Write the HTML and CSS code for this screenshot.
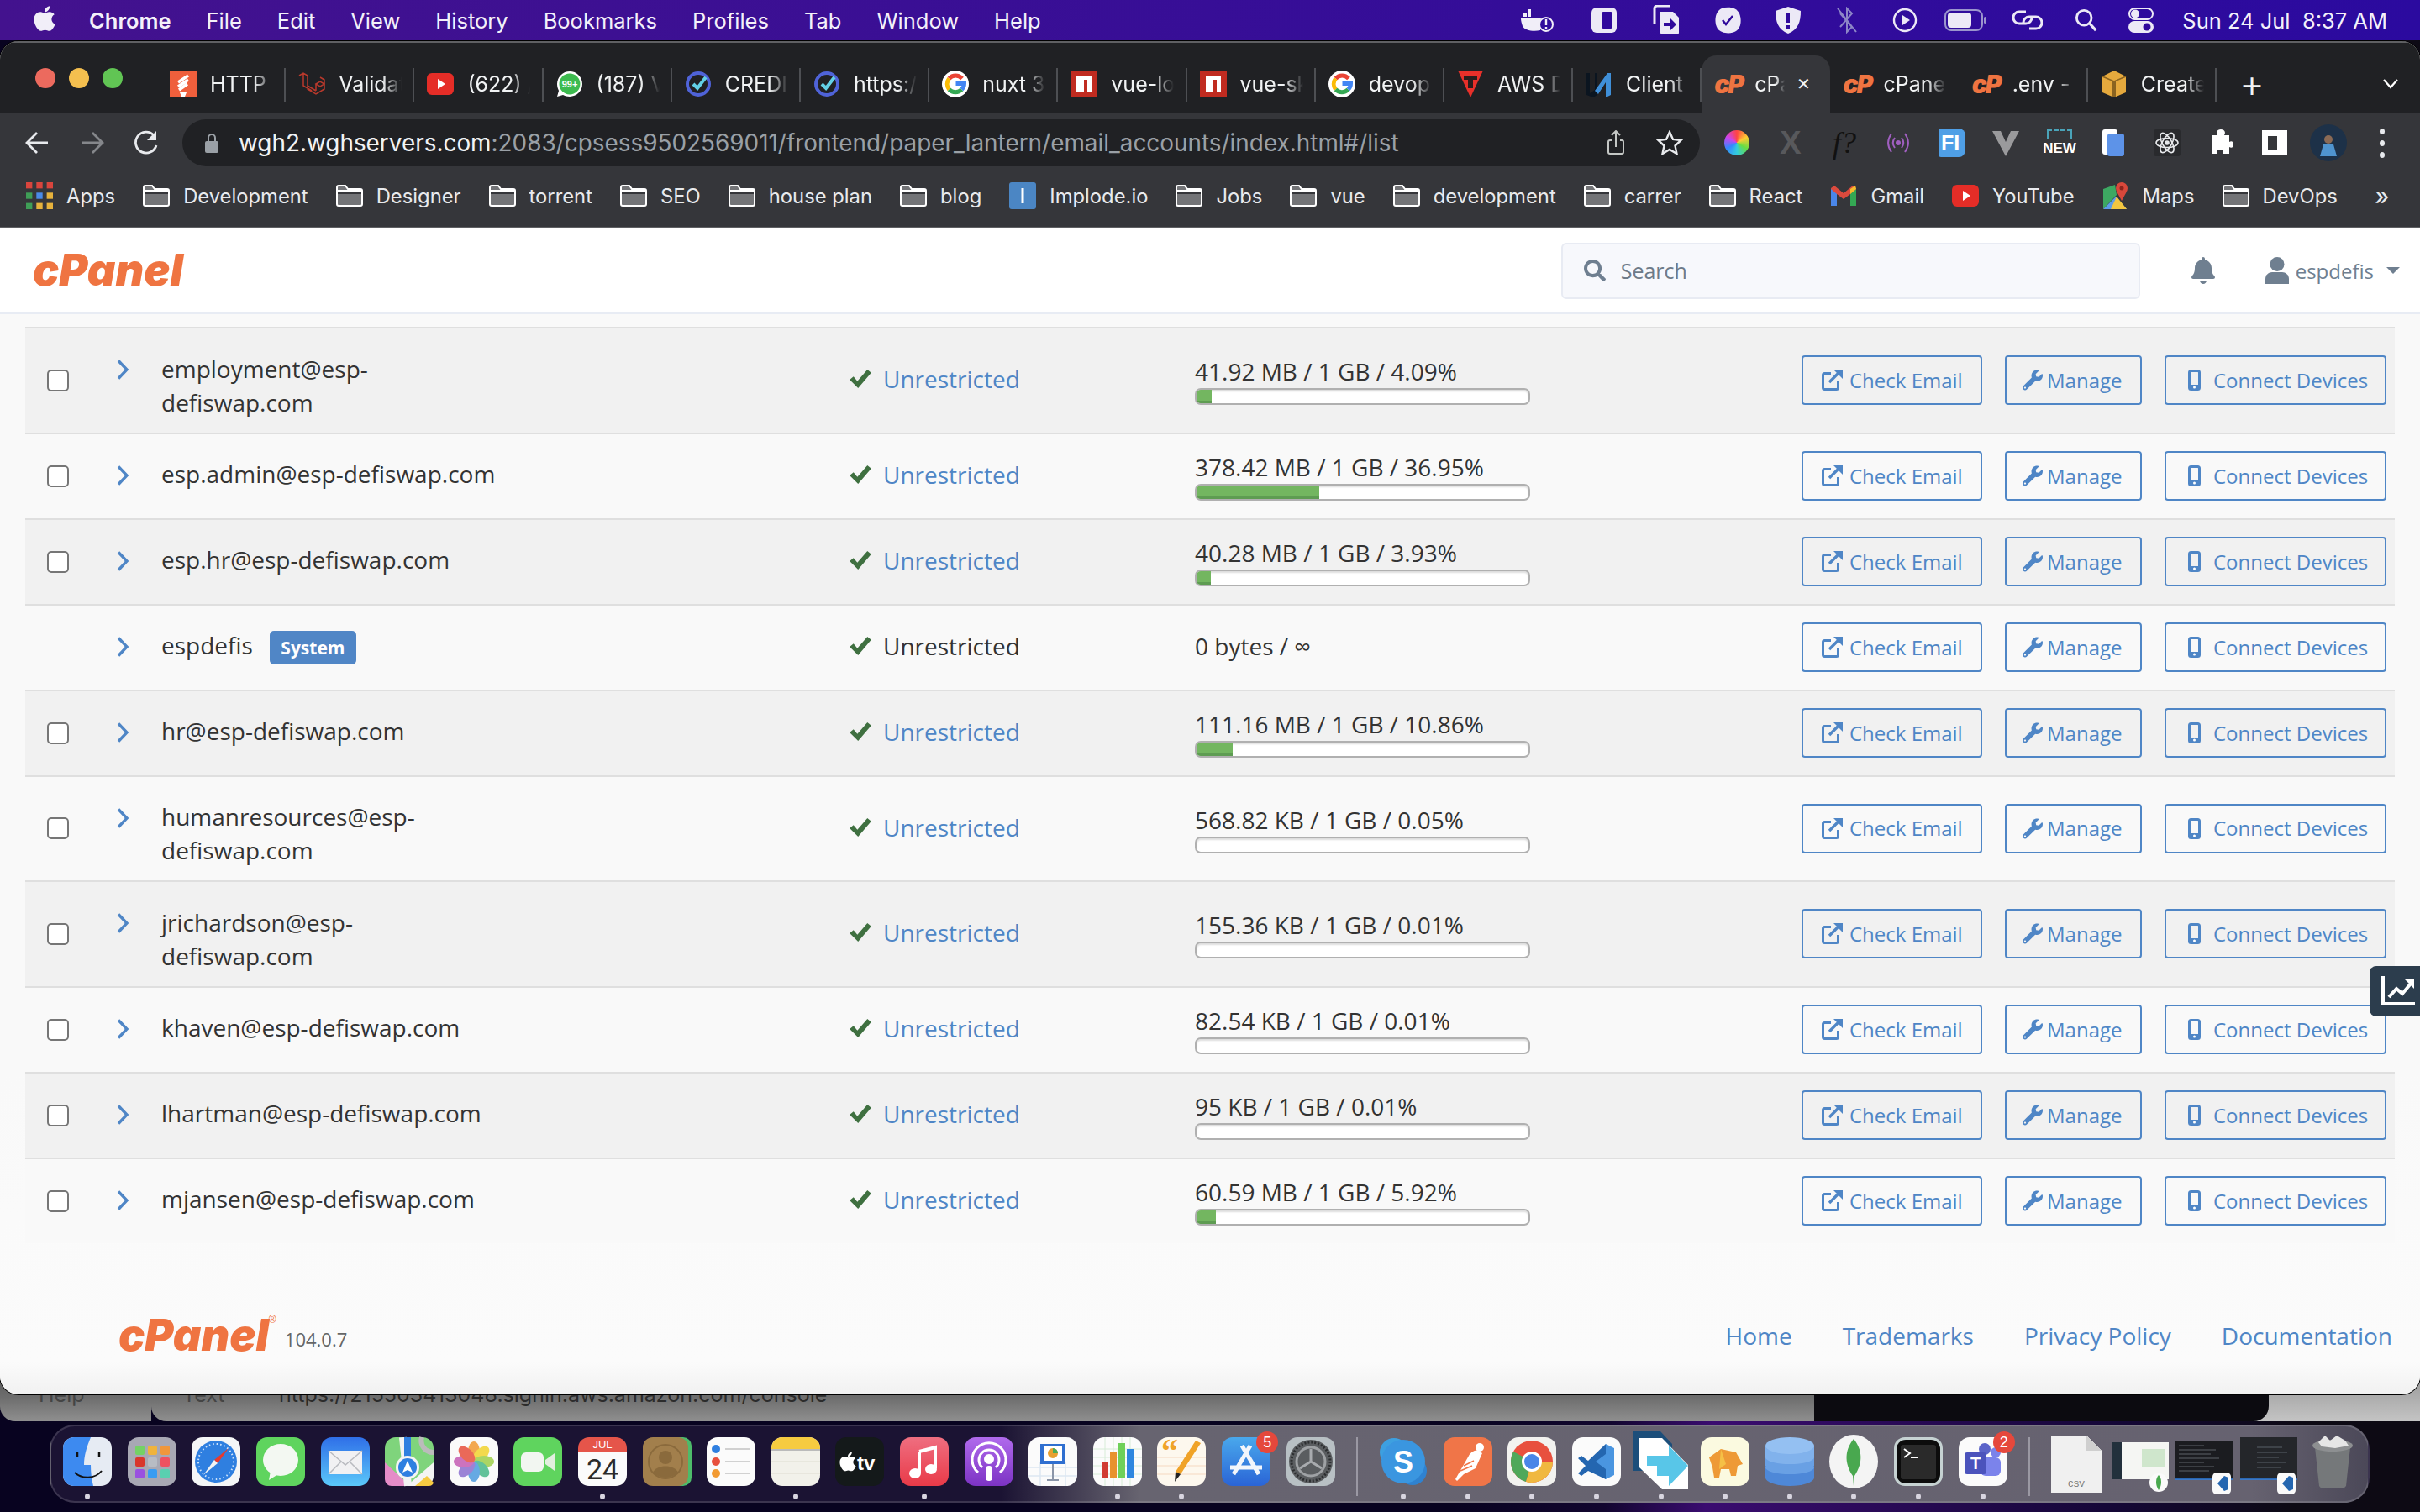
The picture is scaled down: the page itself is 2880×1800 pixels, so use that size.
FILE: index.html
```html
<!DOCTYPE html>
<html lang="en">
  <head>
    <meta charset="UTF-8" />
    <title>cPanel - Email Accounts</title>
    <link rel="stylesheet" href="styles.css">
  </head>
  <body>
    <!-- shared icons -->
    <svg class="defs" aria-hidden="true">
      <symbol id="i-apple" viewBox="0 0 384 512"><path d="M318.7 268.7c-.2-36.7 16.4-64.4 50-84.8-18.8-26.9-47.2-41.7-84.7-44.6-35.5-2.8-74.3 20.7-88.5 20.7-15 0-49.4-19.7-76.4-19.7C63.3 141.2 4 184.8 4 273.5q0 39.3 14.4 81.2c12.8 36.7 59 126.7 107.2 125.2 25.2-.6 43-17.9 75.8-17.9 31.8 0 48.3 17.9 76.4 17.9 48.6-.7 90.4-82.5 102.6-119.3-65.2-30.7-61.7-90-61.7-91.9zm-56.6-164.2c27.3-32.4 24.8-61.9 24-72.5-24.1 1.4-52 16.4-67.9 34.9-17.5 19.8-27.8 44.3-25.6 71.9 26.1 2 49.9-11.4 69.5-34.3z"/></symbol>
      <symbol id="i-folder" viewBox="0 0 32 26"><path d="M1 3a2 2 0 0 1 2-2h8l3 4h15a2 2 0 0 1 2 2v16a2 2 0 0 1-2 2H3a2 2 0 0 1-2-2z" fill="#737477" stroke="#fff" stroke-width="2"/><path d="M1 7h30" stroke="#fff" stroke-width="2"/><rect x="2" y="8" width="28" height="3" fill="#35363a"/></symbol>
      <symbol id="i-google" viewBox="0 0 32 32"><circle cx="16" cy="16" r="16" fill="#fff"/><g fill="none" stroke-width="5"><path d="M24 9.5a10.5 10.5 0 0 0-15.5 0" stroke="#ea4335"/><path d="M8.5 9.5a10.5 10.5 0 0 0 0 13" stroke="#fbbc05"/><path d="M8.5 22.500a10.500 10.500 0 0 0 15 0" stroke="#34a853"/><path d="M23.500 22.500c2-2 3-4 3-7h-10" stroke="#4285f4"/></g></symbol>
      <symbol id="i-npm" viewBox="0 0 32 32"><rect width="32" height="32" fill="#c02b20"/><path d="M7 26V6h18v20h-5V11h-4v15z" fill="#fff"/></symbol>
      <symbol id="i-task" viewBox="0 0 32 32"><circle cx="16" cy="16" r="13" fill="none" stroke="#4f63d8" stroke-width="4"/><path d="M10 16l5 5 10-13" fill="none" stroke="#62d0e6" stroke-width="4"/></symbol>
      <symbol id="i-yt" viewBox="0 0 32 32"><rect y="3" width="32" height="26" rx="6" fill="#e52d27"/><path d="M13 10l9 6-9 6z" fill="#fff"/></symbol>
      <symbol id="i-check" viewBox="0 0 28 24"><path d="M0 13l5-4 5 6L23 0l5 4-17 20z"/></symbol>
      <symbol id="i-chevron" viewBox="0 0 15 24"><path d="M2 1.500l10 10.500-10 10.500" fill="none" stroke="currentColor" stroke-width="3.400"/></symbol>
      <symbol id="i-external" viewBox="0 0 25 25"><path d="M11 4.500H3.500a2 2 0 0 0-2 2v15a2 2 0 0 0 2 2h14a2 2 0 0 0 2-2V14" fill="none" stroke="currentColor" stroke-width="3"/><path d="M9 15L21 3" stroke="currentColor" stroke-width="3.400"/><path d="M14 0h11v11z" fill="currentColor"/></symbol>
      <symbol id="i-wrench" viewBox="0 0 512 512"><path d="M507.73 109.1c-2.24-9.03-13.54-12.09-20.12-5.51l-74.36 74.36-67.88-11.31-11.31-67.88 74.36-74.36c6.62-6.62 3.43-17.9-5.66-20.16-47.38-11.74-99.55.91-136.58 37.93-39.64 39.64-50.55 97.1-34.05 147.2L18.74 402.76c-24.99 24.99-24.99 65.51 0 90.5 24.99 24.99 65.51 24.99 90.5 0l213.21-213.21c50.12 16.71 107.47 5.68 147.37-34.22 37.07-37.07 49.7-89.32 37.91-136.73zM64 472c-13.25 0-24-10.75-24-24 0-13.26 10.75-24 24-24s24 10.74 24 24c0 13.25-10.75 24-24 24z"/></symbol>
      <symbol id="i-mobile" viewBox="0 0 15 25"><rect x="1.500" y="1.500" width="12" height="22" rx="2" fill="none" stroke="currentColor" stroke-width="3"/><rect x="1" y="18" width="13" height="6" rx="1" fill="currentColor"/><circle cx="7.500" cy="21" r="1.500" fill="#fff"/></symbol>
    </svg>

    <!-- mac menu bar -->
    <header class="menubar">
      <svg class="apple"><use href="#i-apple" /></svg>
      <nav class="menu">
        <b>Chrome</b><span>File</span><span>Edit</span><span>View</span><span>History</span>
        <span>Bookmarks</span><span>Profiles</span><span>Tab</span><span>Window</span><span>Help</span>
      </nav>
      <div class="status-icons">
        <svg viewBox="0 0 40 32" width="40" height="32"><g fill="#f1eef8"><rect x="8" y="3" width="4" height="4"/><rect x="8" y="8" width="4" height="4"/><rect x="3" y="8" width="4" height="4"/><path d="M0 14h24c-1 4-1 8-1 14-8 2-19 0-21-5-1-3-2-6-2-9z"/></g><circle cx="30" cy="21" r="8" fill="#2f0b9c" stroke="#f1eef8" stroke-width="2"/><path d="M30 15v7m0 2v2" stroke="#f1eef8" stroke-width="2.400"/></svg>
        <svg viewBox="0 0 30 30" width="30" height="30"><rect x="0" y="0" width="30" height="30" rx="6" fill="#ece9f6"/><rect x="12" y="5" width="13" height="20" rx="2" fill="#30099c"/></svg>
        <svg viewBox="0 0 34 36" width="34" height="36"><path d="M20 1H5a3 3 0 0 0-3 3v18" fill="none" stroke="#ece9f6" stroke-width="3"/><path d="M9 8h15l7 7v18a2 2 0 0 1-2 2H11a2 2 0 0 1-2-2z" fill="#ece9f6"/><path d="M13 21h8v-5l7 7-7 7v-5h-8z" fill="#30099c"/></svg>
        <svg viewBox="0 0 32 32" width="32" height="32"><path d="M9 2c8-3 18-1 21 6 3 8 2 17-4 21-6 4-18 3-22-3C0 20 0 6 9 2z" fill="#ece9f6"/><path d="M10 16l4 5 8-10" fill="none" stroke="#30099c" stroke-width="2.500"/></svg>
        <svg viewBox="0 0 32 34" width="32" height="34"><path d="M16 1l15 5c0 13-3 22-15 27C4 28 1 19 1 6z" fill="#ece9f6"/><path d="M16 8v12m0 3v4" stroke="#30099c" stroke-width="4"/></svg>
        <svg viewBox="0 0 26 32" width="26" height="32"><path d="M5 8l14 16-6 6V2l6 6L5 24M2 2l22 28" fill="none" stroke="#8d86c7" stroke-width="2"/></svg>
        <svg viewBox="0 0 30 30" width="30" height="30"><circle cx="15" cy="15" r="13" fill="none" stroke="#ece9f6" stroke-width="2.400"/><path d="M12 9l9 6-9 6z" fill="#ece9f6"/></svg>
        <svg viewBox="0 0 50 26" width="50" height="26"><rect x="1" y="1" width="44" height="24" rx="7" fill="none" stroke="#9b95cd" stroke-width="2"/><rect x="4" y="4" width="28" height="18" rx="4" fill="#ece9f6"/><rect x="47" y="9" width="3" height="8" rx="1.500" fill="#9b95cd"/></svg>
        <svg viewBox="0 0 36 30" width="36" height="30"><path d="M16 5h-8a7 7 0 0 0 0 14h8a7 7 0 0 0 7-7" fill="none" stroke="#ece9f6" stroke-width="3"/><path d="M20 25h8a7 7 0 0 0 0-14h-8a7 7 0 0 0-7 7" fill="none" stroke="#ece9f6" stroke-width="3"/></svg>
        <svg viewBox="0 0 30 30" width="28" height="30"><circle cx="12" cy="12" r="9.500" fill="none" stroke="#ece9f6" stroke-width="3"/><path d="M19 19l8 9" stroke="#ece9f6" stroke-width="3.500"/></svg>
        <svg viewBox="0 0 30 30" width="30" height="30"><rect x="1" y="1" width="28" height="13" rx="6.500" fill="none" stroke="#ece9f6" stroke-width="2"/><circle cx="8" cy="7.500" r="5" fill="#ece9f6"/><rect y="16" width="30" height="14" rx="7" fill="#ece9f6"/><circle cx="22" cy="23" r="4.500" fill="#30099c"/></svg>
      </div>
      <time class="clock">Sun 24 Jul&nbsp;&nbsp;8:37 AM</time>
    </header>

    <!-- browser window -->
    <main class="window">
      <div class="tabbar">
        <div class="lights"><i class="red"></i><i class="yellow"></i><i class="green"></i></div>
        <div class="tab">
          <svg class="favicon" viewBox="0 0 32 32"><rect width="32" height="32" fill="#ef5f3c"/><path d="M10 14L22 6M10 19l12-8M11 23l10-7" stroke="#fff" stroke-width="3.500"/><path d="M12 26h8l-2 5h-4z" fill="#fff"/></svg>
          <span class="tab-title">HTTP r</span>
        </div>
        <div class="tab">
          <svg class="favicon" viewBox="0 0 32 32" fill="none" stroke="#b8392c" stroke-width="1.500"><path d="M1 6l5-3 5 3v16l10 6 10-6V16M6 3v15l10 6M11 6v12l10 6M21 16l5-3 5 3-5 3zM21 16v8M26 8l5 3v5"/></svg>
          <span class="tab-title">Validat</span>
        </div>
        <div class="tab"><svg class="favicon"><use href="#i-yt" /></svg><span class="tab-title">(622) /</span></div>
        <div class="tab">
          <svg class="favicon" viewBox="0 0 32 32"><path d="M16 1a15 15 0 0 1 0 30c-3 0-6-1-8-2l-7 2 2-7c-1-2-2-5-2-8A15 15 0 0 1 16 1z" fill="#fff"/><circle cx="16" cy="16" r="12.500" fill="#3dbb4f"/><text x="16" y="20" class="wa-text">99+</text></svg>
          <span class="tab-title">(187) V</span>
        </div>
        <div class="tab"><svg class="favicon"><use href="#i-task" /></svg><span class="tab-title">CREDI</span></div>
        <div class="tab"><svg class="favicon"><use href="#i-task" /></svg><span class="tab-title">https:/</span></div>
        <div class="tab"><svg class="favicon"><use href="#i-google" /></svg><span class="tab-title">nuxt 3</span></div>
        <div class="tab"><svg class="favicon"><use href="#i-npm" /></svg><span class="tab-title">vue-lo</span></div>
        <div class="tab"><svg class="favicon"><use href="#i-npm" /></svg><span class="tab-title">vue-sk</span></div>
        <div class="tab"><svg class="favicon"><use href="#i-google" /></svg><span class="tab-title">devop</span></div>
        <div class="tab">
          <svg class="favicon" viewBox="0 0 32 32"><path d="M1 0h30L16 32z" fill="#e8302a"/><path d="M8 6h16v5h-5v10h-6V11H8z" fill="#2a1d1d"/></svg>
          <span class="tab-title">AWS D</span>
        </div>
        <div class="tab">
          <svg class="favicon" viewBox="0 0 32 32"><path d="M1 3h4v24l6-4V3h3v26l-5 3-8-3z" fill="#0b1520"/><path d="M11 24L26 3h4v26l-6 3V14l-9 14z" fill="#3f8fd8"/></svg>
          <span class="tab-title">Client</span>
        </div>
        <div class="tab tab-active">
          <span class="favicon cp-icon">cP</span>
          <span class="tab-title">cPa</span>
          <span class="tab-close">&#10005;</span>
        </div>
        <div class="tab no-sep"><span class="favicon cp-icon">cP</span><span class="tab-title">cPanel</span></div>
        <div class="tab"><span class="favicon cp-icon">cP</span><span class="tab-title">.env -</span></div>
        <div class="tab">
          <svg class="favicon" viewBox="0 0 32 32"><path d="M16 0l14 7v19l-14 6-14-6V7z" fill="#e5a93d"/><path d="M2 7l14 6 14-6" fill="none" stroke="#8a6320" stroke-width="1.500"/><path d="M14 13h4v19h-4z" fill="#8a6320"/></svg>
          <span class="tab-title">Create</span>
        </div>
        <span class="tab-new">+</span>
        <svg class="tab-search" viewBox="0 0 18 12"><path d="M1 1l8 9 8-9" fill="none" stroke="#fff" stroke-width="2.200"/></svg>
      </div>

      <div class="toolbar">
        <svg class="nav-btn" viewBox="0 0 64 30"><path d="M44 15H20M31 3L19 15l12 12" fill="none" stroke="#e8eaed" stroke-width="2.800"/></svg>
        <svg class="nav-btn" viewBox="0 0 64 30"><path d="M20 15h24M33 3l12 12-12 12" fill="none" stroke="#85878b" stroke-width="2.800"/></svg>
        <svg class="nav-btn" viewBox="0 0 64 30"><path d="M42 6a12.500 12.500 0 1 0 3 12" fill="none" stroke="#e8eaed" stroke-width="2.800"/><path d="M45 1v11H34z" fill="#e8eaed"/></svg>
        <div class="omnibox">
          <svg class="lock" viewBox="0 0 16 24"><path d="M4 11V6a4 4 0 0 1 8 0v5" fill="none" stroke="#9aa0a6" stroke-width="2"/><rect y="10" width="16" height="14" rx="2" fill="#9aa0a6"/></svg>
          <div class="url"><span class="url-host">wgh2.wghservers.com</span>:2083/cpsess9502569011/frontend/paper_lantern/email_accounts/index.html#/list</div>
          <svg class="omni-btn" viewBox="0 0 64 30"><path d="M27 12h-2a2 2 0 0 0-2 2v12a2 2 0 0 0 2 2h14a2 2 0 0 0 2-2V14a2 2 0 0 0-2-2h-2M32 20V2M27 6l5-5 5 5" fill="none" stroke="#c4c7c5" stroke-width="2"/></svg>
          <svg class="omni-btn" viewBox="0 0 64 30"><path d="M32 2l4 9 9.500 1-7 6.500 2 9.500-8.500-5-8.500 5 2-9.500-7-6.500 9.500-1z" fill="none" stroke="#e8eaed" stroke-width="2.400"/></svg>
        </div>
        <div class="ext"><i class="ext-wheel"></i></div>
        <div class="ext ext-x">X</div>
        <div class="ext ext-f">f?</div>
        <div class="ext"><svg viewBox="0 0 30 30" width="30" height="30" fill="none" stroke="#a05fc0" stroke-width="2"><path d="M7 4c-5 7-5 15 0 22M23 4c5 7 5 15 0 22M11 9c-3 4-3 8 0 12M19 9c3 4 3 8 0 12"/><circle cx="15" cy="15" r="2" fill="#a05fc0"/></svg></div>
        <div class="ext"><span class="ext-fi">FI</span></div>
        <div class="ext"><svg viewBox="0 0 32 32" width="32" height="32"><path d="M0 2h10l6 13 6-13h10L16 32z" fill="#9a9a9c"/></svg></div>
        <div class="ext ext-new"><i></i>NEW</div>
        <div class="ext"><svg viewBox="0 0 26 32" width="26" height="32"><rect x="0" y="0" width="18" height="30" rx="3" fill="#fff"/><rect x="6" y="5" width="20" height="27" rx="3" fill="#5d93e8"/></svg></div>
        <div class="ext"><svg viewBox="0 0 32 32" width="32" height="32" fill="none" stroke="#e8eaed" stroke-width="1.600"><rect width="32" height="32" rx="3" fill="#292a2d" stroke="none"/><ellipse cx="16" cy="16" rx="13" ry="5.500"/><ellipse cx="16" cy="16" rx="13" ry="5.500" transform="rotate(60 16 16)"/><ellipse cx="16" cy="16" rx="13" ry="5.500" transform="rotate(120 16 16)"/><circle cx="16" cy="16" r="2" fill="#e8eaed"/></svg></div>
        <div class="ext"><svg viewBox="0 0 30 32" width="30" height="32"><path d="M4 7h7c-2-3-1-7 4-7s6 4 4 7h6v8c3-2 5 0 5 3s-2 5-5 3v8h-8c2-3 0-5-3-5s-5 2-3 5H4z" fill="#fff"/></svg></div>
        <div class="ext"><i class="ext-side"></i></div>
        <div class="ext"><svg viewBox="0 0 44 44" width="44" height="44"><circle cx="22" cy="22" r="22" fill="#1d3148"/><circle cx="22" cy="18" r="5" fill="#8a6a55"/><path d="M12 38l4-14h12l4 14z" fill="#4f94cf"/></svg></div>
        <div class="ext ext-dots"><i></i><i></i><i></i></div>
      </div>

      <div class="bookmarks">
        <a class="bm"><svg class="bm-icon" viewBox="0 0 26 26"><g fill="#d9453d"><rect width="6" height="6"/><rect x="10" width="6" height="6"/><rect x="20" width="6" height="6"/></g><rect y="10" width="6" height="6" fill="#3f9e57"/><rect x="10" y="10" width="6" height="6" fill="#4a8be8"/><rect x="20" y="10" width="6" height="6" fill="#e6b23c"/><rect y="20" width="6" height="6" fill="#3f9e57"/><rect x="10" y="20" width="6" height="6" fill="#e6b23c"/><rect x="20" y="20" width="6" height="6" fill="#e6b23c"/></svg><span>Apps</span></a>
        <a class="bm"><svg class="bm-icon"><use href="#i-folder" /></svg><span>Development</span></a>
        <a class="bm"><svg class="bm-icon"><use href="#i-folder" /></svg><span>Designer</span></a>
        <a class="bm"><svg class="bm-icon"><use href="#i-folder" /></svg><span>torrent</span></a>
        <a class="bm"><svg class="bm-icon"><use href="#i-folder" /></svg><span>SEO</span></a>
        <a class="bm"><svg class="bm-icon"><use href="#i-folder" /></svg><span>house plan</span></a>
        <a class="bm"><svg class="bm-icon"><use href="#i-folder" /></svg><span>blog</span></a>
        <a class="bm"><svg class="bm-icon" viewBox="0 0 32 32"><rect width="32" height="32" rx="3" fill="#4b86c4"/><rect x="14.500" y="7" width="3" height="18" fill="#fff"/></svg><span>Implode.io</span></a>
        <a class="bm"><svg class="bm-icon"><use href="#i-folder" /></svg><span>Jobs</span></a>
        <a class="bm"><svg class="bm-icon"><use href="#i-folder" /></svg><span>vue</span></a>
        <a class="bm"><svg class="bm-icon"><use href="#i-folder" /></svg><span>development</span></a>
        <a class="bm"><svg class="bm-icon"><use href="#i-folder" /></svg><span>carrer</span></a>
        <a class="bm"><svg class="bm-icon"><use href="#i-folder" /></svg><span>React</span></a>
        <a class="bm"><svg class="bm-icon" viewBox="0 0 32 26"><path d="M1 25V4l4-3 11 9 11-9 4 3v21h-7V11l-8 6-8-6v14z" fill="#dc4a3d"/><path d="M1 25V5l7 6v14z" fill="#4a86e8"/><path d="M24 25V11l7-6v20z" fill="#34a853"/><path d="M24 11l7-6-1-4-6 4z" fill="#f3bd2d"/></svg><span>Gmail</span></a>
        <a class="bm"><svg class="bm-icon"><use href="#i-yt" /></svg><span>YouTube</span></a>
        <a class="bm"><svg class="bm-icon" viewBox="0 0 30 32"><path d="M0 8l14-5 2 12L0 32z" fill="#3da862"/><path d="M0 32l15-15 13 15z" fill="#5c9de8"/><path d="M9 32l7-15 12 15z" fill="#f2c640"/><circle cx="22" cy="7" r="7" fill="#d9483b"/><circle cx="22" cy="7" r="2.500" fill="#8e241c"/><path d="M16 11l6 11 6-11z" fill="#d9483b"/></svg><span>Maps</span></a>
        <a class="bm"><svg class="bm-icon"><use href="#i-folder" /></svg><span>DevOps</span></a>
        <span class="bm-more">&raquo;</span>
      </div>

      <!-- cpanel page -->
      <div class="cp-header">
        <div class="logo">cPanel</div>
        <div class="search">
          <svg viewBox="0 0 512 512" width="26" height="26"><path d="M505 442.7L405.3 343c-4.500-4.500-10.600-7-17-7H372c27.600-35.300 44-79.700 44-128C416 93.100 322.900 0 208 0S0 93.100 0 208s93.100 208 208 208c48.300 0 92.700-16.400 128-44v16.300c0 6.400 2.500 12.500 7 17l99.700 99.700c9.400 9.400 24.600 9.400 33.900 0l28.300-28.300c9.400-9.400 9.400-24.600.1-34zM208 336c-70.700 0-128-57.200-128-128 0-70.700 57.200-128 128-128 70.700 0 128 57.200 128 128 0 70.700-57.200 128-128 128z"/></svg>
          <span>Search</span>
        </div>
        <svg class="bell" viewBox="0 0 448 512"><path d="M224 512c35.320 0 63.970-28.650 63.970-64H160.030c0 35.350 28.650 64 63.970 64zm215.390-149.710c-19.320-20.760-55.470-51.990-55.470-154.290 0-77.700-54.480-139.900-127.940-155.160V32c0-17.670-14.320-32-31.980-32s-31.980 14.330-31.980 32v20.840C118.560 68.100 64.080 130.300 64.080 208c0 102.300-36.150 133.530-55.470 154.290-6 6.450-8.660 14.160-8.610 21.710.11 16.400 12.980 32 32.100 32h383.800c19.120 0 32-15.600 32.100-32 .05-7.550-2.610-15.270-8.610-21.710z"/></svg>
        <div class="user">
          <svg viewBox="0 0 28 32" width="28" height="32"><circle cx="14" cy="8.500" r="8.500"/><path d="M0 32V26c0-5 4-8 8-8h12c4 0 8 3 8 8v6z"/></svg>
          <span>espdefis</span>
          <i class="caret"></i>
        </div>
      </div>

      <div class="page">
        <div class="rows">
          <div class="row">
            <div class="c-check"><input type="checkbox" /></div>
            <svg class="chevron"><use href="#i-chevron" /></svg>
            <div class="c-name">employment@esp-defiswap.com</div>
            <div class="c-status"><svg class="tick"><use href="#i-check" /></svg><a>Unrestricted</a></div>
            <div class="c-usage">41.92 MB / 1 GB / 4.09%<div class="bar"><div class="fill" style="width: 4.5%"></div></div></div>
            <div class="c-actions">
              <a class="btn btn-check"><svg><use href="#i-external" /></svg>Check Email</a>
              <a class="btn btn-manage"><svg><use href="#i-wrench" /></svg>Manage</a>
              <a class="btn btn-connect"><svg><use href="#i-mobile" /></svg>Connect Devices</a>
            </div>
          </div>
          <div class="row">
            <div class="c-check"><input type="checkbox" /></div>
            <svg class="chevron"><use href="#i-chevron" /></svg>
            <div class="c-name">esp.admin@esp-defiswap.com</div>
            <div class="c-status"><svg class="tick"><use href="#i-check" /></svg><a>Unrestricted</a></div>
            <div class="c-usage">378.42 MB / 1 GB / 36.95%<div class="bar"><div class="fill" style="width: 36.95%"></div></div></div>
            <div class="c-actions">
              <a class="btn btn-check"><svg><use href="#i-external" /></svg>Check Email</a>
              <a class="btn btn-manage"><svg><use href="#i-wrench" /></svg>Manage</a>
              <a class="btn btn-connect"><svg><use href="#i-mobile" /></svg>Connect Devices</a>
            </div>
          </div>
          <div class="row">
            <div class="c-check"><input type="checkbox" /></div>
            <svg class="chevron"><use href="#i-chevron" /></svg>
            <div class="c-name">esp.hr@esp-defiswap.com</div>
            <div class="c-status"><svg class="tick"><use href="#i-check" /></svg><a>Unrestricted</a></div>
            <div class="c-usage">40.28 MB / 1 GB / 3.93%<div class="bar"><div class="fill" style="width: 4.4%"></div></div></div>
            <div class="c-actions">
              <a class="btn btn-check"><svg><use href="#i-external" /></svg>Check Email</a>
              <a class="btn btn-manage"><svg><use href="#i-wrench" /></svg>Manage</a>
              <a class="btn btn-connect"><svg><use href="#i-mobile" /></svg>Connect Devices</a>
            </div>
          </div>
          <div class="row">
            <div class="c-check"></div>
            <svg class="chevron"><use href="#i-chevron" /></svg>
            <div class="c-name c-system">espdefis <span class="badge">System</span></div>
            <div class="c-status"><svg class="tick"><use href="#i-check" /></svg>Unrestricted</div>
            <div class="c-usage c-usage-free">0 bytes / &infin;</div>
            <div class="c-actions">
              <a class="btn btn-check"><svg><use href="#i-external" /></svg>Check Email</a>
              <a class="btn btn-manage"><svg><use href="#i-wrench" /></svg>Manage</a>
              <a class="btn btn-connect"><svg><use href="#i-mobile" /></svg>Connect Devices</a>
            </div>
          </div>
          <div class="row">
            <div class="c-check"><input type="checkbox" /></div>
            <svg class="chevron"><use href="#i-chevron" /></svg>
            <div class="c-name">hr@esp-defiswap.com</div>
            <div class="c-status"><svg class="tick"><use href="#i-check" /></svg><a>Unrestricted</a></div>
            <div class="c-usage">111.16 MB / 1 GB / 10.86%<div class="bar"><div class="fill" style="width: 10.86%"></div></div></div>
            <div class="c-actions">
              <a class="btn btn-check"><svg><use href="#i-external" /></svg>Check Email</a>
              <a class="btn btn-manage"><svg><use href="#i-wrench" /></svg>Manage</a>
              <a class="btn btn-connect"><svg><use href="#i-mobile" /></svg>Connect Devices</a>
            </div>
          </div>
          <div class="row">
            <div class="c-check"><input type="checkbox" /></div>
            <svg class="chevron"><use href="#i-chevron" /></svg>
            <div class="c-name">humanresources@esp-defiswap.com</div>
            <div class="c-status"><svg class="tick"><use href="#i-check" /></svg><a>Unrestricted</a></div>
            <div class="c-usage">568.82 KB / 1 GB / 0.05%<div class="bar"></div></div>
            <div class="c-actions">
              <a class="btn btn-check"><svg><use href="#i-external" /></svg>Check Email</a>
              <a class="btn btn-manage"><svg><use href="#i-wrench" /></svg>Manage</a>
              <a class="btn btn-connect"><svg><use href="#i-mobile" /></svg>Connect Devices</a>
            </div>
          </div>
          <div class="row">
            <div class="c-check"><input type="checkbox" /></div>
            <svg class="chevron"><use href="#i-chevron" /></svg>
            <div class="c-name">jrichardson@esp-defiswap.com</div>
            <div class="c-status"><svg class="tick"><use href="#i-check" /></svg><a>Unrestricted</a></div>
            <div class="c-usage">155.36 KB / 1 GB / 0.01%<div class="bar"></div></div>
            <div class="c-actions">
              <a class="btn btn-check"><svg><use href="#i-external" /></svg>Check Email</a>
              <a class="btn btn-manage"><svg><use href="#i-wrench" /></svg>Manage</a>
              <a class="btn btn-connect"><svg><use href="#i-mobile" /></svg>Connect Devices</a>
            </div>
          </div>
          <div class="row">
            <div class="c-check"><input type="checkbox" /></div>
            <svg class="chevron"><use href="#i-chevron" /></svg>
            <div class="c-name">khaven@esp-defiswap.com</div>
            <div class="c-status"><svg class="tick"><use href="#i-check" /></svg><a>Unrestricted</a></div>
            <div class="c-usage">82.54 KB / 1 GB / 0.01%<div class="bar"></div></div>
            <div class="c-actions">
              <a class="btn btn-check"><svg><use href="#i-external" /></svg>Check Email</a>
              <a class="btn btn-manage"><svg><use href="#i-wrench" /></svg>Manage</a>
              <a class="btn btn-connect"><svg><use href="#i-mobile" /></svg>Connect Devices</a>
            </div>
          </div>
          <div class="row">
            <div class="c-check"><input type="checkbox" /></div>
            <svg class="chevron"><use href="#i-chevron" /></svg>
            <div class="c-name">lhartman@esp-defiswap.com</div>
            <div class="c-status"><svg class="tick"><use href="#i-check" /></svg><a>Unrestricted</a></div>
            <div class="c-usage">95 KB / 1 GB / 0.01%<div class="bar"></div></div>
            <div class="c-actions">
              <a class="btn btn-check"><svg><use href="#i-external" /></svg>Check Email</a>
              <a class="btn btn-manage"><svg><use href="#i-wrench" /></svg>Manage</a>
              <a class="btn btn-connect"><svg><use href="#i-mobile" /></svg>Connect Devices</a>
            </div>
          </div>
          <div class="row">
            <div class="c-check"><input type="checkbox" /></div>
            <svg class="chevron"><use href="#i-chevron" /></svg>
            <div class="c-name">mjansen@esp-defiswap.com</div>
            <div class="c-status"><svg class="tick"><use href="#i-check" /></svg><a>Unrestricted</a></div>
            <div class="c-usage">60.59 MB / 1 GB / 5.92%<div class="bar"><div class="fill" style="width: 5.92%"></div></div></div>
            <div class="c-actions">
              <a class="btn btn-check"><svg><use href="#i-external" /></svg>Check Email</a>
              <a class="btn btn-manage"><svg><use href="#i-wrench" /></svg>Manage</a>
              <a class="btn btn-connect"><svg><use href="#i-mobile" /></svg>Connect Devices</a>
            </div>
          </div>
        </div>

        <footer class="cp-footer">
          <div class="foot-brand">
            <div class="logo logo-small">cPanel<sup>&reg;</sup></div>
            <span class="version">104.0.7</span>
          </div>
          <nav class="foot-links">
            <a>Home</a><a>Trademarks</a><a>Privacy Policy</a><a>Documentation</a>
          </nav>
        </footer>
      </div>

      <div class="side-tab">
        <svg viewBox="0 0 40 40" width="40" height="40"><path d="M2 2v33h38" fill="none" stroke="#fff" stroke-width="4"/><path d="M9 27l9-10 7 6 10-12" fill="none" stroke="#fff" stroke-width="4"/><path d="M28 6h11v11z" fill="#fff"/></svg>
      </div>
    </main>

    <!-- windows behind chrome -->
    <div class="behind">
      <div class="behind-win behind-a">Help</div>
      <div class="behind-win behind-b"><span class="behind-tab">Text</span><span>https://215503413048.signin.aws.amazon.com/console</span></div>
      <div class="behind-dark"></div>
      <div class="behind-win behind-c"></div>
    </div>

    <!-- dock -->
    <div class="dock">
      <div class="dock-item on"><svg viewBox="0 0 58 58"><rect width="58" height="58" rx="13" fill="#e6ebf3"/><path d="M13 0h20c-5 12-8 22-8 33h8c0 9 1 17 3 25H13A13 13 0 0 1 0 45V13A13 13 0 0 1 13 0z" fill="#3d8af0"/><path d="M14 42c8 8 24 8 32-2" fill="none" stroke="#111" stroke-width="2"/><path d="M17 17v7M43 17v7" stroke="#111" stroke-width="2.500"/></svg></div>
      <div class="dock-item"><svg viewBox="0 0 58 58"><rect width="58" height="58" rx="13" fill="#a8a8b4"/><g><rect x="9" y="10" width="11" height="11" rx="2" fill="#74d265"/><rect x="24" y="10" width="11" height="11" rx="2" fill="#f0b33c"/><rect x="39" y="10" width="11" height="11" rx="2" fill="#f0973c"/><rect x="9" y="24" width="11" height="11" rx="2" fill="#d8362c"/><rect x="24" y="24" width="11" height="11" rx="2" fill="#b8bcc4"/><rect x="39" y="24" width="11" height="11" rx="2" fill="#ef5161"/><rect x="9" y="38" width="11" height="11" rx="2" fill="#9a50e0"/><rect x="24" y="38" width="11" height="11" rx="2" fill="#3a9cf2"/><rect x="39" y="38" width="11" height="11" rx="2" fill="#59d0b0"/></g></svg></div>
      <div class="dock-item"><svg viewBox="0 0 58 58"><rect width="58" height="58" rx="13" fill="#f5f6f7"/><circle cx="29" cy="29" r="25" fill="#2f7fe0"/><circle cx="29" cy="29" r="21" fill="none" stroke="#cfe4fb" stroke-width="2" stroke-dasharray="1.500 3"/><path d="M44 13L31 31l-4-4z" fill="#e8392e"/><path d="M14 45l13-18 4 4z" fill="#f3f3f3"/></svg></div>
      <div class="dock-item"><svg viewBox="0 0 58 58"><rect width="58" height="58" rx="13" fill="#5fd45e"/><ellipse cx="29" cy="27" rx="21" ry="19" fill="#f3f8f2"/><path d="M17 40l-2 11 11-7z" fill="#f3f8f2"/></svg></div>
      <div class="dock-item"><svg viewBox="0 0 58 58"><defs><linearGradient id="mail" x1="0" y1="0" x2="0" y2="1"><stop offset="0" stop-color="#2f6fe8"/><stop offset="1" stop-color="#5bc8fa"/></linearGradient></defs><rect width="58" height="58" rx="13" fill="url(#mail)"/><rect x="9" y="16" width="40" height="28" fill="#f1f1f3"/><path d="M9 16l20 17 20-17M9 44l15-15M49 44L34 29" fill="none" stroke="#b9bbc0" stroke-width="1.500"/></svg></div>
      <div class="dock-item"><svg viewBox="0 0 58 58"><rect width="58" height="58" rx="13" fill="#7fd47c"/><path d="M0 30L30 58H8a8 8 0 0 1-8-8z" fill="#e58cc8"/><path d="M20 0h9v58H20z" fill="#f3f3f3" transform="rotate(-6 24 29)"/><path d="M58 30v16a12 12 0 0 1-12 12H26z" fill="#f4f4f4"/><path d="M36 58l14-12 8 8a6 6 0 0 1-6 4z" fill="#f6ca42"/><rect x="23" y="0" width="8" height="24" fill="#2f7fe0"/><circle cx="27" cy="36" r="14" fill="#f4f4f4"/><circle cx="27" cy="36" r="11" fill="#2f7fe0"/><path d="M27 28l6 14-6-3-6 3z" fill="#fff"/><path d="M44 0a14 14 0 0 0 14 18" fill="none" stroke="#bbb" stroke-width="6"/></svg></div>
      <div class="dock-item"><svg viewBox="0 0 58 58"><rect width="58" height="58" rx="13" fill="#fafafa"/><g opacity=".85"><ellipse cx="29" cy="17" rx="7" ry="12" fill="#f29a33"/><ellipse cx="29" cy="17" rx="7" ry="12" fill="#f2d42f" transform="rotate(45 29 29)"/><ellipse cx="29" cy="17" rx="7" ry="12" fill="#9fcf4a" transform="rotate(90 29 29)"/><ellipse cx="29" cy="17" rx="7" ry="12" fill="#49b98a" transform="rotate(135 29 29)"/><ellipse cx="29" cy="17" rx="7" ry="12" fill="#4d9be0" transform="rotate(180 29 29)"/><ellipse cx="29" cy="17" rx="7" ry="12" fill="#8b6fd0" transform="rotate(225 29 29)"/><ellipse cx="29" cy="17" rx="7" ry="12" fill="#c45cb4" transform="rotate(270 29 29)"/><ellipse cx="29" cy="17" rx="7" ry="12" fill="#e8503e" transform="rotate(315 29 29)"/></g></svg></div>
      <div class="dock-item"><svg viewBox="0 0 58 58"><rect width="58" height="58" rx="13" fill="#5fd45e"/><rect x="9" y="18" width="27" height="23" rx="6" fill="#f2f6f1"/><path d="M38 27l11-8v21l-11-8z" fill="#e2efdf"/></svg></div>
      <div class="dock-item on dock-cal"><div class="cal-month">JUL</div><div class="cal-day">24</div></div>
      <div class="dock-item"><svg viewBox="0 0 58 58"><rect x="8" width="50" height="58" rx="10" fill="#4dbb6a"/><rect width="54" height="58" rx="12" fill="#a27f4c"/><circle cx="27" cy="29" r="20" fill="none" stroke="#8a6a3c" stroke-width="2"/><circle cx="27" cy="24" r="8" fill="#8a6a3c"/><path d="M12 42c4-10 26-10 30 0-8 8-22 8-30 0z" fill="#8a6a3c"/></svg></div>
      <div class="dock-item"><svg viewBox="0 0 58 58"><rect width="58" height="58" rx="13" fill="#fbfbfb"/><circle cx="11" cy="14" r="5" fill="#2f7fe0"/><circle cx="11" cy="29" r="5" fill="#e8503e"/><circle cx="11" cy="43" r="5" fill="#f29a33"/><path d="M22 14h30M22 29h30M22 43h30" stroke="#c4c4c4" stroke-width="1.500"/></svg></div>
      <div class="dock-item on"><svg viewBox="0 0 58 58"><rect width="58" height="58" rx="13" fill="#f2f1ea"/><path d="M0 13A13 13 0 0 1 13 0h32a13 13 0 0 1 13 13v2H0z" fill="#f6cb40"/><path d="M0 15h58" stroke="#bbb" stroke-width="2"/><path d="M0 29h58M0 43h58" stroke="#dedcd0" stroke-width="1"/></svg></div>
      <div class="dock-item"><svg viewBox="0 0 58 58"><rect width="58" height="58" rx="13" fill="#14191a"/><svg class="tv-apple" x="5" y="16" width="20" height="26"><use href="#i-apple" fill="#fff" /></svg><text x="26" y="39" class="tv-text">tv</text></svg></div>
      <div class="dock-item on"><svg viewBox="0 0 58 58"><defs><linearGradient id="music" x1="0" y1="0" x2="0" y2="1"><stop offset="0" stop-color="#ef6e80"/><stop offset="1" stop-color="#e93a48"/></linearGradient></defs><rect width="58" height="58" rx="13" fill="url(#music)"/><path d="M23 17l19-5v25" fill="none" stroke="#fff" stroke-width="4"/><path d="M23 17v25" stroke="#fff" stroke-width="4"/><ellipse cx="18" cy="43" rx="7" ry="6" fill="#fff"/><ellipse cx="37" cy="38" rx="7" ry="6" fill="#fff"/></svg></div>
      <div class="dock-item"><svg viewBox="0 0 58 58"><defs><linearGradient id="pod" x1="0" y1="0" x2="0" y2="1"><stop offset="0" stop-color="#b06aec"/><stop offset="1" stop-color="#7c33c4"/></linearGradient></defs><rect width="58" height="58" rx="13" fill="url(#pod)"/><g fill="none" stroke="#fff" stroke-width="3"><path d="M16 42a20 20 0 1 1 26 0"/><path d="M21 36a12 12 0 1 1 16 0"/></g><circle cx="29" cy="26" r="6" fill="#fff"/><rect x="25" y="34" width="8" height="18" rx="4" fill="#fff"/></svg></div>
      <div class="dock-item"><svg viewBox="0 0 58 58"><rect width="58" height="58" rx="13" fill="#fbfbfb"/><path d="M0 36h58M0 46h58M14 30v28M44 30v28" stroke="#dde7f2" stroke-width="1.500"/><rect x="14" y="8" width="30" height="24" fill="#2f6fd0"/><rect x="18" y="11" width="22" height="17" fill="#fff"/><circle cx="29" cy="19" r="6" fill="#e8a030"/><path d="M29 19V13a6 6 0 0 1 6 6z" fill="#4dab58"/><rect x="28" y="32" width="2" height="20" fill="#8a95a8"/><rect x="22" y="50" width="14" height="2" fill="#8a95a8"/></svg></div>
      <div class="dock-item on"><svg viewBox="0 0 58 58"><rect width="58" height="58" rx="13" fill="#fbfbfb"/><path d="M0 14h58M0 24h58M0 34h58M0 44h58M14 0v58M24 0v58M34 0v58M44 0v58" stroke="#d7ecd7" stroke-width="1"/><rect x="10" y="30" width="8" height="18" fill="#d13b33"/><rect x="20" y="18" width="8" height="30" fill="#e8922f"/><rect x="30" y="7" width="8" height="41" fill="#6fd05a"/><rect x="40" y="14" width="8" height="34" fill="#2f86e0"/></svg></div>
      <div class="dock-item on"><svg viewBox="0 0 58 58"><rect width="58" height="58" rx="13" fill="#fdf8ee"/><path d="M0 24h58M0 34h58M0 44h58" stroke="#f7e2cf" stroke-width="1.500"/><text x="5" y="30" class="pages-quote">&ldquo;</text><path d="M46 4l6 3-24 37-6-3z" fill="#f0a328"/><path d="M22 41l6 3-7 9z" fill="#222"/></svg></div>
      <div class="dock-item"><svg viewBox="0 0 58 58"><defs><linearGradient id="store" x1="0" y1="0" x2="0" y2="1"><stop offset="0" stop-color="#49a8ec"/><stop offset="1" stop-color="#2a64d6"/></linearGradient></defs><rect width="58" height="58" rx="13" fill="url(#store)"/><path d="M24 10l20 34M34 10L14 44M10 36h38" stroke="#f2f6fb" stroke-width="5"/></svg><b class="dock-badge">5</b></div>
      <div class="dock-item"><svg viewBox="0 0 58 58"><rect width="58" height="58" rx="13" fill="#b8c0c4"/><circle cx="29" cy="29" r="26" fill="#5a5d60"/><circle cx="29" cy="29" r="17" fill="none" stroke="#9ea1a4" stroke-width="3"/><path d="M29 29V14M29 29l-13 8M29 29l13 8" stroke="#a8abae" stroke-width="3"/><circle cx="29" cy="29" r="23" fill="none" stroke="#2c2e30" stroke-width="3" stroke-dasharray="2 2"/></svg></div>
      <div class="dock-sep"></div>
      <div class="dock-item on"><svg viewBox="0 0 58 58"><circle cx="18" cy="18" r="17" fill="#3da0e0"/><circle cx="40" cy="40" r="17" fill="#2f82d0"/><circle cx="29" cy="29" r="26" fill="#3a96e0"/><text x="29" y="42" class="skype-text">S</text></svg></div>
      <div class="dock-item on"><svg viewBox="0 0 58 58"><rect width="58" height="58" rx="13" fill="#f07548"/><path d="M14 50L30 22c2-4 8-8 12-6l4 3-8 18-14 7-8 8z" fill="#fff"/><circle cx="43" cy="12" r="5" fill="#fff"/><path d="M20 40l14-6M24 34l12-6" stroke="#f07548" stroke-width="1.500"/></svg></div>
      <div class="dock-item on"><svg viewBox="0 0 58 58"><rect width="58" height="58" rx="13" fill="#f2f2ef"/><circle cx="29" cy="29" r="25" fill="#e8503e"/><path d="M29 29L7 17A25 25 0 0 0 22 53z" fill="#4fa85a"/><path d="M29 29h25a25 25 0 0 1-32 24z" fill="#f0b840"/><circle cx="29" cy="29" r="12" fill="#fff"/><circle cx="29" cy="29" r="9" fill="#4a86e8"/></svg></div>
      <div class="dock-item on"><svg viewBox="0 0 58 58"><rect width="58" height="58" rx="13" fill="#fbfbfb"/><path d="M40 8l10 5v32l-10 5-20-20 20-14z" fill="#4a95e0"/><path d="M40 8L19 28l-8-6-4 3 9 9-9 9 4 3 8-6 21 10V38L28 29l12-9z" fill="#2466b0"/></svg></div>
      <div class="dock-item on"><svg viewBox="0 0 58 58"><path d="M-4-7H28L42 8V40H-4z" fill="#1c4e7a"/><path d="M3 1H30L61 33V62H30L3 36z" fill="#fff"/><path d="M12 22H38V10L61 34 38 58V46H24V34H12z" fill="#58c6e8"/></svg></div>
      <div class="dock-item on"><svg viewBox="0 0 58 58"><rect width="58" height="58" rx="13" fill="#fbfae0"/><path d="M10 24l14-10 18 4 8 14-6 2-2 12h-6l-2-8-10 0-2 10h-6l-2-12z" fill="#ee9a36"/><path d="M24 14l6 18-8 6z" fill="#f5c046"/></svg></div>
      <div class="dock-item on"><svg viewBox="0 0 58 58"><ellipse cx="29" cy="48" rx="29" ry="10" fill="#4e88d8"/><rect y="10" width="58" height="38" fill="#4e88d8"/><rect y="24" width="58" height="10" fill="#69a0e4"/><ellipse cx="29" cy="36" rx="29" ry="8" fill="#69a0e4"/><rect y="10" width="58" height="14" fill="#81b2ec"/><ellipse cx="29" cy="24" rx="29" ry="8" fill="#81b2ec"/><ellipse cx="29" cy="10" rx="29" ry="10" fill="#94c0f2"/></svg></div>
      <div class="dock-item on"><svg viewBox="0 0 58 58"><ellipse cx="29" cy="29" rx="29" ry="32" fill="#f4f4f4"/><path d="M29 2c10 12 12 28 1 44l-1 12-1-12C17 30 19 14 29 2z" fill="#49a84f"/></svg></div>
      <div class="dock-item on"><svg viewBox="0 0 58 58"><rect width="58" height="58" rx="13" fill="#c6d2d2"/><rect x="3" y="3" width="52" height="52" rx="11" fill="#0c0c0c"/><rect x="8" y="9" width="42" height="41" rx="3" fill="#2a2a2a"/><path d="M12 14l7 5-7 5" fill="none" stroke="#fff" stroke-width="2"/><path d="M20 24h8" stroke="#fff" stroke-width="2"/></svg></div>
      <div class="dock-item on"><svg viewBox="0 0 58 58"><rect width="58" height="58" rx="13" fill="#fbfbfb"/><circle cx="44" cy="18" r="6" fill="#7b83eb"/><circle cx="31" cy="14" r="7" fill="#5b64c9"/><rect x="26" y="24" width="24" height="22" rx="6" fill="#7b83eb"/><rect x="7" y="18" width="26" height="26" rx="3" fill="#4b53bc"/><text x="20" y="38" class="teams-text">T</text></svg><b class="dock-badge">2</b></div>
      <div class="dock-sep"></div>
      <div class="dock-item"><svg viewBox="0 0 58 58"><path d="M0-2h42l18 18v50H0z" fill="#f0f0f0"/><path d="M42-2v18h18z" fill="#fff"/><path d="M42-2l18 18H42z" fill="#cfcfcf"/><text x="30" y="59" class="csv-text">CSV</text></svg></div>
      <div class="dock-item"><svg viewBox="0 0 68 58" class="thumb"><rect y="6" width="68" height="44" fill="#f5f6f3"/><rect y="6" width="12" height="44" fill="#22303c"/><rect x="36" y="14" width="28" height="22" fill="#cfe6cc"/><circle cx="56" cy="54" r="11" fill="#fafafa"/><path d="M56 45c4 4 4 12 0 18-4-6-4-14 0-18z" fill="#49a84f"/></svg></div>
      <div class="dock-item"><svg viewBox="0 0 68 58" class="thumb"><rect y="4" width="68" height="46" fill="#1b1c20"/><path d="M4 10h30M4 15h44M4 20h38M4 25h48M4 30h30M4 35h42M4 40h36" stroke="#5e6268" stroke-width="1"/><path d="M0 50h68" stroke="#2f7fe0" stroke-width="1.500"/><rect x="44" y="42" width="22" height="26" rx="5" fill="#fafafa"/><path d="M58 46l5 2v14l-5 2-8-9z" fill="#2466b0"/></svg></div>
      <div class="dock-item"><svg viewBox="0 0 68 58" class="thumb"><rect y="0" width="68" height="50" fill="#24262a"/><path d="M20 12h30M20 18h36M20 24h26M20 30h34M20 36h28" stroke="#586068" stroke-width="1"/><path d="M0 50h68" stroke="#2f7fe0" stroke-width="1.500"/><rect x="44" y="42" width="22" height="26" rx="5" fill="#fafafa"/><path d="M58 46l5 2v14l-5 2-8-9z" fill="#2466b0"/></svg></div>
      <div class="dock-item"><svg viewBox="0 0 58 58"><path d="M8 12h42l-5 46a6 6 0 0 1-5 3H19a6 6 0 0 1-6-3z" fill="#75787a"/><ellipse cx="29" cy="10" rx="24" ry="7" fill="#8d8f91"/><path d="M12 6l8-8 6 6 8-6 10 6 4 6-16 3-16-2z" fill="#e6e6e6"/></svg></div>
    </div>
  </body>
</html>
```

FILE: styles.css
```css
* {
  box-sizing: border-box;
}

html,
body {
  margin: 0;
  width: 2880px;
  height: 1800px;
  overflow: hidden;
}

body {
  font-family: Inter, "Liberation Sans", sans-serif;
  background: linear-gradient(95deg, #080320 62%, #12062f 68%, #3a0c70 72%, #140736 88%, #0d0a14 95%);
}

a {
  color: inherit;
  text-decoration: none;
}

.defs {
  position: absolute;
  width: 0;
  height: 0;
}

/* mac menu bar */
.menubar {
  display: flex;
  align-items: center;
  height: 48px;
  padding-left: 40px;
  background: linear-gradient(90deg, #43128e, #2b0a9f);
  color: #f4f1fa;
  font-size: 25.5px;
}

.apple {
  width: 26px;
  height: 34px;
  fill: #f1eef8;
  margin-right: 40px;
  margin-top: -4px;
}

.menu {
  display: flex;
  gap: 42px;
}

.menu b {
  font-weight: 600;
}

.status-icons {
  display: grid;
  grid-template-columns: 80.5px 78px 73px 71px 72px 68.5px 68.5px 76px 73px 66px 64.5px;
  justify-items: center;
  align-items: center;
  margin-left: auto;
}

.clock {
  margin: 0 39px 0 17px;
  white-space: nowrap;
}

/* chrome window */
.window {
  position: relative;
  z-index: 1;
  display: flex;
  flex-direction: column;
  height: 1611px;
  margin: 1px 0 -20px;
  border-radius: 22px;
  overflow: hidden;
  background: #f9f9f9;
  box-shadow: 0 0 0 1px #000;
}

.tabbar {
  display: flex;
  align-items: flex-end;
  height: 85px;
  background: #202124;
  border-top: 2px solid #5f6063;
  color: #f1f3f4;
  font-size: 25px;
}

.lights {
  display: flex;
  gap: 16px;
  width: 187px;
  padding: 0 0 29px 42px;
  align-self: flex-end;
}

.lights i {
  width: 24px;
  height: 24px;
  border-radius: 50%;
}

.red {
  background: #ec6a5e;
}

.yellow {
  background: #f4bf4f;
}

.green {
  background: #61c554;
}

.tab {
  position: relative;
  display: flex;
  align-items: center;
  flex: none;
  width: 153.2px;
  height: 68px;
  padding-left: 15px;
}

.tab::after {
  content: "";
  position: absolute;
  right: 0;
  top: 15px;
  height: 40px;
  width: 2px;
  background: #4d4f53;
}

.tab-active {
  background: #35363a;
  border-radius: 18px 18px 0 0;
}

.tab-active::after,
.no-sep::after {
  display: none;
}

.favicon {
  flex: none;
  width: 32px;
  height: 32px;
}

.cp-icon {
  font: italic 900 30px/32px Inter, sans-serif;
  color: #ef7441;
  letter-spacing: -2px;
}

.tab-title {
  margin-left: 16px;
  width: 75px;
  overflow: hidden;
  white-space: nowrap;
  -webkit-mask-image: linear-gradient(90deg, #000 70%, transparent);
  mask-image: linear-gradient(90deg, #000 70%, transparent);
}

.tab-active .tab-title {
  width: 36px;
}

.tab-close {
  margin-left: 14px;
  font-size: 20px;
}

.tab-new {
  width: 60px;
  margin-left: 12px;
  height: 68px;
  text-align: center;
  font-size: 46px;
  line-height: 66px;
  font-weight: 300;
}

.tab-search {
  width: 18px;
  height: 12px;
  margin: 0 0 28px 126px;
}

.wa-text {
  font: bold 11px "Liberation Sans", sans-serif;
  fill: #fff;
  text-anchor: middle;
}

.toolbar {
  display: flex;
  align-items: center;
  height: 64px;
  padding: 8px 0 0 13px;
  background: #35363a;
}

.nav-btn {
  width: 64px;
  height: 30px;
}

.omnibox {
  display: flex;
  align-items: center;
  flex: none;
  width: 1806px;
  height: 56px;
  margin: 0 12px;
  padding: 0 4px 0 27px;
  background: #202124;
  border-radius: 28px;
  color: #9aa0a6;
  font-size: 27.9px;
}

.lock {
  width: 16px;
  height: 24px;
  margin-right: 24px;
  flex: none;
}

.url {
  flex: 1;
  white-space: nowrap;
}

.url-host {
  color: #f1f3f4;
}

.omni-btn {
  width: 64px;
  height: 30px;
  flex: none;
}

.ext {
  display: flex;
  flex: none;
  align-items: center;
  justify-content: center;
  width: 64px;
  height: 50px;
}

.ext-wheel {
  width: 30px;
  height: 30px;
  border-radius: 50%;
  background: conic-gradient(#f44, #fc3, #6d4, #3cd, #38f, #c4e, #f44);
}

.ext-x {
  color: #58595c;
  font: bold 38px "Liberation Sans", sans-serif;
}

.ext-f {
  color: #111;
  font: italic 36px "Liberation Serif", serif;
}

.ext-fi {
  width: 32px;
  height: 34px;
  padding-left: 3px;
  background: #4f9fe6;
  border-radius: 3px 8px 8px 3px;
  color: #fff;
  font: bold 25px/34px "Liberation Sans", sans-serif;
}

.ext-new {
  flex-direction: column;
  color: #fff;
  font: bold 17px/18px "Liberation Sans", sans-serif;
}

.ext-new i {
  width: 30px;
  height: 12px;
  margin-bottom: 2px;
  border: 2px dashed #4aa3b8;
  border-bottom: 0;
}

.ext-side {
  width: 30px;
  height: 30px;
  border: 7px solid #fff;
  border-left-width: 7px;
  border-right-width: 12px;
  background: #35363a;
}

.ext-dots {
  flex-direction: column;
  gap: 7px;
}

.ext-dots i {
  width: 6px;
  height: 7px;
  border-radius: 50%;
  background: #e8eaed;
}

.bookmarks {
  display: flex;
  align-items: center;
  gap: 33px;
  height: 74px;
  padding: 0 0 2px 31px;
  background: #35363a;
  border-bottom: 2px solid #5f6063;
  color: #e8eaed;
  font-size: 23.8px;
}

.bm {
  display: flex;
  align-items: center;
  gap: 16px;
}

.bm-icon {
  width: 32px;
  height: 32px;
}

.bm-more {
  position: absolute;
  left: 2826px;
  font-size: 30px;
}

/* cpanel header */
.cp-header {
  display: flex;
  align-items: center;
  flex: none;
  height: 102px;
  padding: 0 24px 0 39px;
  background: #fff;
  border-bottom: 2px solid #e8ecf4;
}

.logo {
  font: italic 900 52px/1 Inter, "Open Sans", sans-serif;
  color: #ef7441;
}

.search {
  display: flex;
  align-items: center;
  gap: 18px;
  width: 689px;
  height: 67px;
  margin-left: auto;
  padding-left: 25px;
  background: #f7f8fc;
  border: 2px solid #e8ebf3;
  border-radius: 6px;
  color: #6d7a88;
  font: 25px "Open Sans", sans-serif;
}

.search svg {
  fill: #6f7f90;
}

.bell {
  width: 28px;
  height: 32px;
  margin-left: 61px;
  fill: #6f7f90;
}

.user {
  display: flex;
  align-items: center;
  gap: 8px;
  margin-left: 60px;
  color: #6f7f90;
  font: 24px "Open Sans", sans-serif;
}

.user svg {
  fill: #6f7f90;
}

.caret {
  width: 0;
  height: 0;
  margin-left: 7px;
  border: 8px solid transparent;
  border-top: 8px solid #6f7f90;
  border-bottom: 0;
}

/* email rows */
.page {
  display: flex;
  flex: 1;
  flex-direction: column;
  padding-top: 15px;
  background: linear-gradient(#f9f9f9 70%, #fbfbfb 97%, #f1f1f1);
  font-family: "Open Sans", sans-serif;
  color: #333;
}

.rows {
  margin: 0 30px;
}

.row {
  display: grid;
  grid-template-columns: 83px 53px 820px 410px 1fr auto;
  align-items: center;
  min-height: 102px;
  padding: 0 10px 0 26px;
  border-top: 2px solid #dfdfdf;
  font-size: 28px;
  line-height: 40px;
}

.row:nth-child(odd) {
  background: #f1f1f1;
}

.row:nth-child(even) {
  background: #f9f9f9;
}

.c-check {
  display: flex;
}

.c-check input {
  appearance: none;
  width: 26px;
  height: 26px;
  margin: 0;
  background: #fff;
  border: 2px solid #767676;
  border-radius: 5px;
}

.chevron {
  align-self: start;
  width: 15px;
  height: 24px;
  margin-top: 37px;
  color: #4f86c6;
}

.c-name {
  align-self: start;
  max-width: 400px;
  padding: 27.5px 0 16px;
}

.c-system {
  display: flex;
  gap: 20px;
  align-items: flex-start;
  max-width: none;
}

.badge {
  width: 103px;
  height: 40px;
  margin-top: 3px;
  background: #5086c6;
  border-radius: 5px;
  color: #fff;
  font-size: 21px;
  font-weight: 700;
  text-align: center;
}

.c-status {
  display: flex;
  align-items: center;
  gap: 13px;
  margin: 0 0 3px -2px;
}

.c-status a {
  color: #4f86c6;
}

.tick {
  width: 28px;
  height: 22px;
  fill: #3f7040;
}

.c-usage {
  white-space: nowrap;
}

.c-usage-free {
  margin-bottom: 3px;
}

.bar {
  width: 399px;
  height: 20px;
  margin-bottom: 1px;
  overflow: hidden;
  background: #fff;
  border: 2px solid #b0b0b0;
  border-radius: 7px;
  box-shadow: inset 0 2px 2px #ddd;
}

.fill {
  height: 100%;
  background: #73b660;
  box-shadow: inset 0 -3px #5e9c52;
}

.c-actions {
  display: flex;
  gap: 27px;
}

.btn {
  display: flex;
  align-items: center;
  height: 59px;
  padding-right: 20px;
  background: transparent;
  border: 2px solid #4f86c6;
  border-radius: 4px;
  color: #4f86c6;
  font-size: 24px;
  white-space: nowrap;
}

.btn svg {
  flex: none;
  fill: #4f86c6;
}

.btn-check {
  width: 215px;
  padding-left: 22px;
  gap: 8px;
}

.btn-check svg {
  width: 25px;
  height: 25px;
}

.btn-manage {
  width: 163px;
  padding-left: 19px;
  gap: 5px;
}

.btn-manage svg {
  width: 24px;
  height: 25px;
}

.btn-connect {
  width: 264px;
  padding-left: 26px;
  gap: 15px;
}

.btn-connect svg {
  width: 15px;
  height: 25px;
}

/* footer */
.cp-footer {
  display: flex;
  flex: 1;
  align-items: center;
  justify-content: space-between;
  padding: 40px 33px 0 141px;
}

.foot-brand {
  display: flex;
  align-items: flex-end;
  gap: 19px;
}

.logo-small {
  position: relative;
}

.logo-small sup {
  position: absolute;
  top: 0;
  font: 12px "Liberation Sans", sans-serif;
}

.version {
  margin-bottom: 7px;
  color: #666;
  font-size: 22px;
}

.foot-links {
  display: flex;
  gap: 60px;
  color: #4f86c6;
  font-size: 28px;
}

.side-tab {
  position: absolute;
  right: 0;
  top: 1101px;
  display: flex;
  align-items: center;
  justify-content: center;
  width: 60px;
  height: 60px;
  padding-left: 8px;
  background: #2c3d4d;
  border-radius: 8px 0 0 8px;
}

/* windows peeking out below chrome */
.behind {
  display: flex;
  height: 52px;
  color: #2b2b2b;
  font-size: 25px;
  line-height: 40px;
}

.behind-win {
  background: linear-gradient(#5c5c5c, #6d6d6d 45%, #8f8f8f);
}

.behind-a {
  width: 180px;
  padding-left: 46px;
  border-radius: 0 0 0 18px;
  color: #444;
}

.behind-b {
  display: flex;
  width: 1979px;
  border-radius: 0 0 0 18px;
}

.behind-tab {
  width: 152px;
  padding-left: 37px;
  color: #444;
}

.behind-dark {
  width: 541px;
  background: #0c0b10;
  border-radius: 0 0 18px 0;
}

.behind-c {
  flex: 1;
  background: linear-gradient(#9a9a9a, #c4c4c4);
  margin-left: -18px;
  position: relative;
  z-index: -1;
}

/* dock */
.dock {
  display: flex;
  width: 2761px;
  height: 93px;
  margin: 4px 0 0 59px;
  padding: 13px 0 0 5px;
  background: linear-gradient(90deg, #1b1333 41%, #676470 47%, #666270 95%, #4b4858);
  border: 2px solid rgba(255, 255, 255, 0.14);
  border-radius: 30px;
}

.dock-item {
  position: relative;
  display: flex;
  flex: none;
  justify-content: center;
  width: 76.6px;
  height: 58px;
}

.dock-item svg {
  flex: none;
  width: 58px;
  height: 58px;
  overflow: visible;
}

.dock-item .thumb {
  width: 68px;
}

.dock-item .tv-apple {
  width: 20px;
  height: 26px;
}

.dock-item.on::after {
  content: "";
  position: absolute;
  top: 67px;
  left: 50%;
  width: 6px;
  height: 7px;
  margin-left: -3px;
  border-radius: 50%;
  background: #d8d5e0;
}

.dock-sep {
  flex: none;
  width: 2px;
  height: 70px;
  margin: 0 16px;
  background: #9a98a3;
}

.dock-badge {
  position: absolute;
  top: -7px;
  right: 0;
  width: 26px;
  height: 26px;
  border-radius: 50%;
  background: #e5483c;
  color: #fff;
  font: 18px/26px "Liberation Sans", sans-serif;
  text-align: center;
}

.dock-cal {
  flex-direction: column;
  align-items: center;
}

.cal-month {
  width: 58px;
  height: 18px;
  background: #e5554a;
  border-radius: 13px 13px 0 0;
  color: #fff;
  font: 13px/18px "Liberation Sans", sans-serif;
  text-align: center;
}

.cal-day {
  width: 58px;
  height: 40px;
  background: #fbfbfb;
  border-radius: 0 0 13px 13px;
  color: #2b2b2b;
  font: 34px/40px Roboto, sans-serif;
  text-align: center;
}

.tv-text {
  font: bold 24px "Liberation Sans", sans-serif;
  fill: #fff;
}

.pages-quote {
  font: bold 40px "Liberation Serif", serif;
  fill: #f0a328;
}

.skype-text {
  font: bold 36px "Liberation Sans", sans-serif;
  fill: #fff;
  text-anchor: middle;
}

.teams-text {
  font: bold 20px "Liberation Sans", sans-serif;
  fill: #fff;
  text-anchor: middle;
}

.csv-text {
  font: 11px "Liberation Mono", monospace;
  fill: #777;
  text-anchor: middle;
}
```
